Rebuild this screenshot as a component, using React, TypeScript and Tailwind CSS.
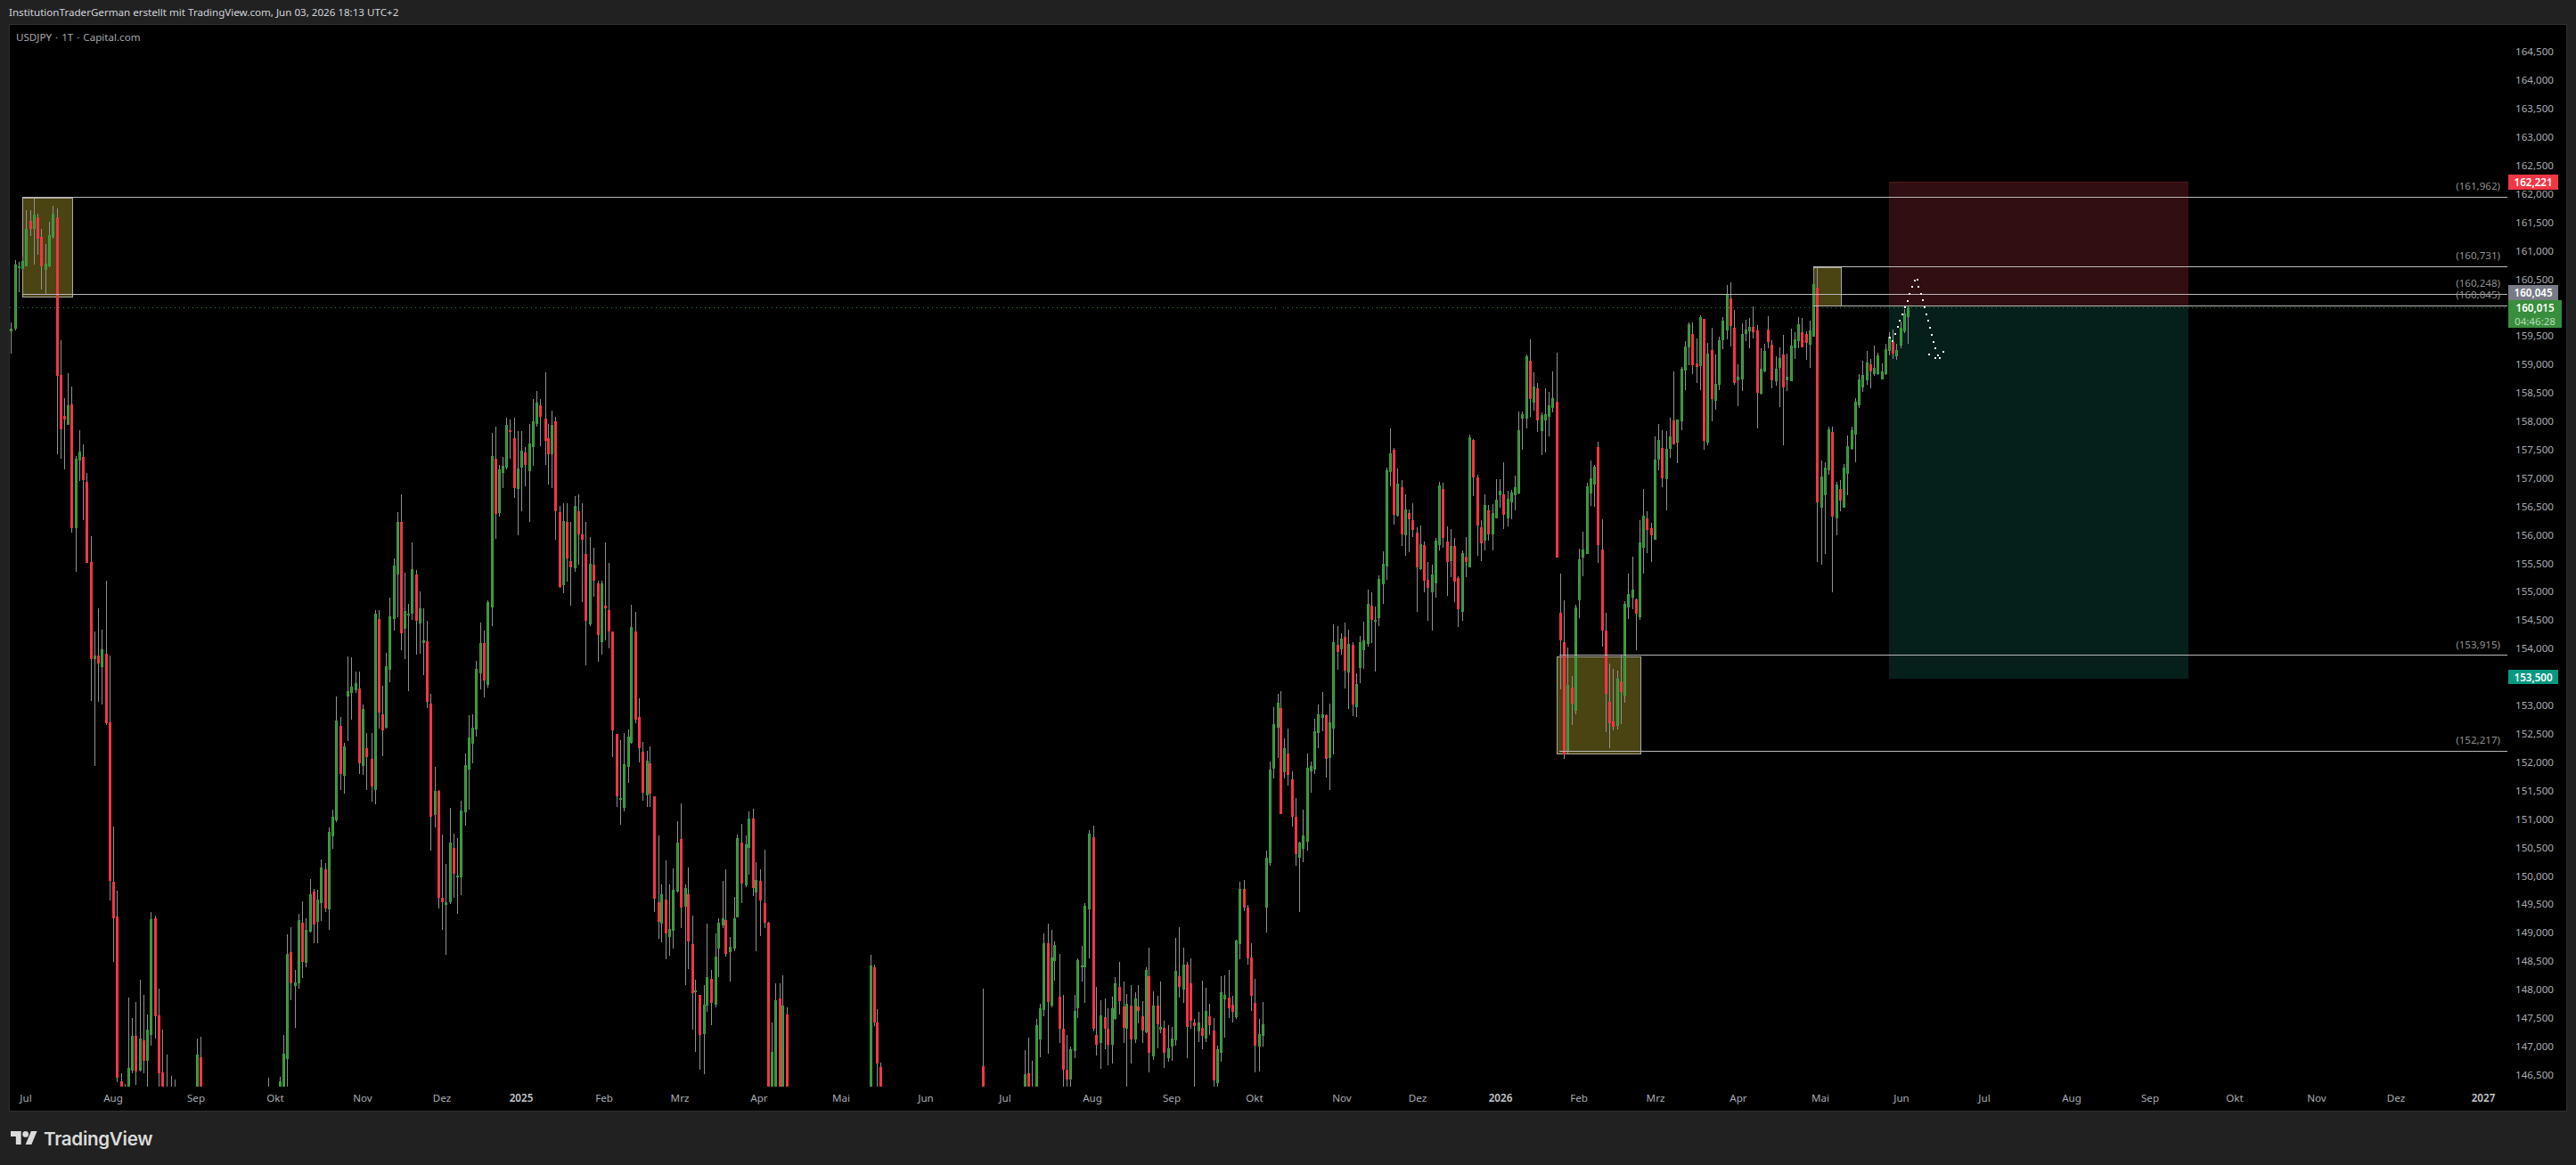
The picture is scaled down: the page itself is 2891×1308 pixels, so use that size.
import type { ReactNode } from "react";

// candles were read off the chart per region: x top bottom high low colour
type Candle = { x: number; top: number; bot: number; hi: number; lo: number; kind: string };

function seg(x0: number, sx: number, y0: number, sy: number, raw: string): Candle[] {
  return raw
    .trim()
    .split(/[;\n]+/)
    .map((s) => s.trim())
    .filter(Boolean)
    .map((s) => {
      const p = s.split(/\s+/);
      return {
        x: Math.round(x0 + Number(p[0]) / sx),
        top: y0 + Number(p[1]) / sy,
        bot: y0 + Number(p[2]) / sy,
        hi: y0 + Number(p[3]) / sy,
        lo: y0 + Number(p[4]) / sy,
        kind: p[5],
      };
    });
}

const candles: Candle[] = [
  ...seg(0, 2.24, 200, 1.522, `
27 257 262 247 300 g;39 148 257 140 260 g;48 151 154 143 195 g;57 141 155 133 156 g;66 87 150 55 150 g
76 73 87 54 98 r;86 62 87 35 148 g;95 67 103 60 130 r;104 100 151 87 190 r;115 146 156 113 197 g
124 97 150 75 152 g;133 61 100 47 103 g;143 67 338 52 472 r;153 336 429 277 480 r;162 407 413 376 497 r
171 388 421 333 421 g;180 387 598 356 605 r;191 480 598 475 672 g;200 467 483 431 517 g;209 476 516 455 585 r
218 519 657 504 657 r;229 656 822 612 893 r;238 816 822 775 1005 g;247 816 830 735 895 r;256 805 836 771 900 g
267 813 932 688 935 r;276 930 1201 816 1235 r;285 1203 1265 1108 1340 r;294 1262 1538 1218 1545 r;305 1544 1560 1530 1560 r
314 0 0 1548 1560 w;323 1521 1560 1400 1560 g;332 1466 1525 1435 1530 g;341 1466 1527 1408 1550 r;352 1471 1525 1370 1527 g
361 1473 1508 1396 1530 r;370 1455 1509 1430 1552 g;379 1267 1464 1254 1483 g;390 1265 1432 1260 1470 r;399 1431 1530 1385 1552 r
408 1528 1560 1455 1560 r;418 0 0 1498 1552 w;429 0 0 1535 1552 w;438 0 0 1540 1552 w
494 1498 1560 1470 1560 g;504 1503 1560 1468 1560 r;675 0 0 1537 1552 w;703 1544 1560 1536 1560 g;713 1496 1560 1465 1560 g
722 1326 1505 1292 1552 g;731 1323 1376 1280 1405 r;742 1374 1380 1353 1453 g;751 1268 1376 1258 1385 g;760 1272 1340 1236 1367 r
769 1285 1341 1265 1348 g;780 1224 1288 1198 1290 g;789 1219 1276 1215 1307 r;798 1233 1271 1216 1307 g;807 1178 1239 1165 1270 g
818 1181 1248 1170 1255 r;827 1117 1250 1110 1285 g;836 1092 1125 1079 1147 g;845 927 1098 886 1100 g;856 936 1018 921 1045 r
865 971 1021 965 1052 g;874 877 886 817 962 g;883 869 880 819 926 g;894 863 875 843 880 g;903 872 1000 843 1018 r
912 907 1004 900 1020 g;921 974 990 948 1045 r;933 993 1040 948 1065 r;942 744 1046 738 1070 g;951 754 913 738 940 r
960 917 943 868 988 r;969 834 939 812 940 g;980 749 840 717 862 g;989 662 754 650 773 g;998 588 677 571 750 g
1007 588 778 540 806 r;1018 740 770 674 822 g;1027 744 747 727 876 g;1036 668 744 623 755 g;1045 677 757 670 815 r
1056 735 761 706 813 g;1065 790 795 735 850 g;1074 792 895 757 905 r;1083 898 1091 881 1150 r;1094 1047 1088 1006 1110 g
1103 1047 1230 1045 1248 r;1112 1230 1238 1122 1285 r;1121 1237 1242 1172 1327 g;1132 1136 1238 1076 1241 g;1141 1145 1189 1120 1230 r
1150 1192 1195 1128 1257 g;1159 1081 1195 1064 1225 g;1170 1003 1084 983 1107 g;1179 956 1010 918 1080 g;1188 939 967 917 1000 g
1197 839 942 825 955 g;1208 795 847 760 873 g;1217 795 859 773 887 r;1226 725 866 722 870 g;1236 475 734 435 765 g
1246 480 574 425 616 r;1255 498 572 490 578 g;1264 492 504 476 530 g;1273 422 495 410 497 g;1282 430 432 413 480 r
1293 445 530 410 547 r;1302 496 531 432 610 g;1311 465 495 432 569 g;1320 469 490 460 527 r;1331 454 500 420 587 g
1340 416 460 377 492 g;1349 383 420 364 425 g;1358 388 408 378 458 r;1370 411 449 332 490 r;1378 445 472 420 523 r
1387 422 472 397 530 g;1396 416 569 408 618 r;1407 571 698 560 700 r;1416 586 695 556 710 g;1425 588 650 556 690 r
1434 655 665 588 730 r;1445 560 667 543 672 g;1454 569 609 540 660 r;1463 609 618 556 725 r;1472 642 757 588 833 r
1483 659 763 613 765 g;1492 660 688 632 715 r;1502 693 781 688 826 r;1511 693 793 688 815 g;1522 731 735 623 790 r
1531 738 775 657 803 r;1540 775 943 775 990 r;1549 950 1056 950 1075 r;1560 1060 1063 960 1105 g
`),
  ...seg(700, 2.613, 380, 1.845, `
1 882 973 817 980 g;12 825 887 810 921 g;22 597 838 552 840 g;33 607 790 566 798 r;45 785 848 745 878 r
56 856 941 836 958 r;67 875 947 855 971 g;77 881 943 845 970 r;90 948 1161 948 1188 r;101 1168 1208 1029 1243 r
111 1151 1212 1131 1252 g;122 1162 1232 1081 1286 r;134 1224 1240 1132 1278 g;145 1142 1228 1098 1264 g;156 1044 1146 1000 1148 g
166 1037 1179 963 1222 r;179 1139 1177 1132 1340 g;189 1151 1249 1096 1306 r;200 1254 1357 1195 1432 r;210 1350 1354 1328 1478 g
223 1360 1443 1360 1515 r;234 1380 1441 1340 1524 g;244 1324 1382 1213 1395 g;255 1326 1376 1308 1422 r;268 1280 1380 1232 1386 g
278 1211 1265 1202 1323 g;289 1202 1216 1123 1222 g;299 1205 1275 1100 1280 r;312 1260 1271 1241 1332 g;323 1201 1264 1157 1270 g
333 1035 1199 1028 1199 g;344 1044 1129 1005 1170 r;357 1048 1133 1030 1136 g;367 994 1055 980 1110 g;378 994 1138 974 1155 r
388 1122 1148 1085 1270 g;399 1123 1164 1100 1238 r;412 1170 1210 1060 1222 r;422 1210 1570 1208 1570 r;433 1478 1570 1418 1570 g
443 1371 1570 1336 1570 g;456 1367 1570 1337 1570 r;466 1382 1570 1319 1570 g;477 1400 1570 1386 1570 r
723 1299 1570 1277 1570 g;733 1302 1417 1298 1425 r;743 1417 1502 1390 1570 r;753 1510 1570 1500 1570 r;1054 1507 1570 1348 1570 r
1175 1524 1570 1474 1570 g;1187 1522 1570 1448 1570 r;1198 0 0 1496 1570 w;1209 1422 1570 1410 1570 g;1219 1387 1452 1378 1490 g
1232 1253 1391 1232 1405 g;1243 1253 1374 1212 1482 r;1253 1282 1382 1225 1386 g;1263 1256 1290 1250 1330 g;1277 1363 1431 1275 1460 r
1287 1430 1515 1360 1570 r;1298 1516 1535 1444 1570 r;1308 1472 1535 1467 1570 g;1321 1393 1477 1360 1492 g;1331 1289 1388 1284 1408 g
1342 1299 1302 1258 1333 g;1352 1175 1302 1170 1376 g;1365 1026 1182 1018 1284 g;1376 1033 1430 1010 1435 r;1386 1443 1463 1343 1486 r
1397 1402 1460 1372 1514 g;1410 1406 1431 1368 1472 r;1420 1430 1463 1388 1506 r;1431 1387 1463 1363 1502 g;1441 1336 1410 1324 1412 g
1454 1343 1373 1291 1400 r;1465 1384 1428 1332 1460 r;1475 1378 1430 1358 1570 g;1486 1382 1452 1340 1502 r;1499 1368 1453 1355 1460 g
1509 1384 1394 1340 1420 r;1520 1404 1433 1373 1460 r;1530 1308 1437 1302 1440 g;1540 1321 1480 1262 1520 r;1553 1382 1487 1352 1495 g
1564 1382 1421 1362 1470 r
`),
  ...seg(1000, 3, 900, 3, `
907 760 770 606 782 g;919 762 846 738 897 r;934 832 864 753 876 g;946 798 825 759 875 g;958 570 804 459 822 g
970 588 624 423 660 r;985 549 633 491 680 g;997 549 759 540 866 r;1009 612 738 528 766 r;1021 744 756 732 960 r
1036 744 774 708 810 g;1048 762 789 603 834 r;1060 705 798 627 810 g;1072 723 753 681 786 r;1087 771 939 729 960 r
1099 834 948 822 960 g;1111 642 846 588 876 g;1123 651 666 585 795 g;1138 660 696 567 729 r;1150 684 708 654 744 r
1162 468 726 465 732 g;1174 294 480 270 531 g;1189 294 357 264 369 r;1201 357 528 348 549 r;1213 525 654 477 705 r
1225 678 822 597 912 r;1240 783 825 732 909 g;1252 750 789 675 825 g;1264 189 357 165 441 g
`),
  ...seg(1300, 3, 350, 2.24, `
376 1151 1387 1132 1393 g;388 1037 1150 995 1173 g;403 983 1046 962 1122 g;415 997 1263 954 1263 r;427 1098 1158 1073 1175 g
439 1111 1165 1048 1193 r;454 1176 1271 1157 1295 r;466 1270 1364 1223 1393 r;478 1335 1373 1332 1511 g;490 1317 1350 1252 1384 g
505 1147 1333 1111 1355 g;517 1142 1156 1132 1210 g;529 1055 1151 1023 1163 g;541 1012 1060 987 1098 g;556 1012 1021 956 1055 g
568 1015 1124 1012 1172 r;580 1033 1122 986 1203 g;592 831 1048 786 1113 g;607 837 856 791 900 r;619 822 850 809 862 g
631 818 903 782 948 r;643 836 907 800 999 g;658 838 988 830 1017 r;670 936 995 909 1019 g;682 831 896 815 935 g
694 827 851 780 898 g;709 735 836 700 842 g;721 739 775 706 834 r;733 775 780 741 905 g;745 672 770 663 790 g
760 634 685 603 735 g;772 399 641 393 675 g;784 356 403 293 439 g;796 347 511 343 535 r;808 432 513 394 516 g
823 441 560 423 590 r;835 497 562 459 613 g;847 506 522 497 605 r;859 524 549 482 566 r;874 556 643 543 755 r
886 585 648 538 650 g;898 587 676 578 705 r;910 674 694 629 777 r;925 661 706 636 802 g;937 576 683 568 720 g
949 437 587 428 600 g;961 446 569 430 594 r;976 578 629 540 715 r;988 589 627 547 668 g;1000 589 679 568 730 r
1012 670 748 665 793 r;1027 607 754 600 777 g;1039 616 629 567 668 r;1051 316 642 310 642 g;1063 323 417 320 464 r
1078 417 538 410 614 r;1090 542 582 525 627 r;1102 486 576 460 600 g;1114 500 560 485 575 r;1129 506 560 484 600 g
1141 473 520 421 520 g;1153 450 461 421 492 g;1165 459 511 379 546 r;1180 470 520 450 540 g;1192 455 479 448 522 g
1204 441 461 412 500 g;1216 298 457 251 460 g;1228 258 269 250 347 g;1243 112 268 108 293 g;1255 123 220 69 265 r
1267 188 228 152 248 g;1279 193 273 178 302 r;1294 260 300 254 361 g;1306 258 273 193 354 g;1318 235 264 202 314 g
1330 217 242 150 253 g;1345 226 618 103 618 r
`),
  ...seg(1700, 3, 280, 2.613, `
157 1066 1146 951 1290 r;169 1152 1483 1030 1494 r;181 1278 1475 1168 1478 g;196 1286 1333 1252 1396 r;208 1051 1353 1043 1363 g
220 909 1030 878 1082 g;232 881 904 828 959 g;247 695 893 685 893 g;259 672 716 619 753 g;271 638 690 632 755 g
283 580 867 564 920 r;298 881 1118 792 1166 r;310 1119 1303 1066 1416 r;322 1328 1389 1215 1463 r;334 1385 1401 1231 1411 r
349 1260 1397 1236 1408 g;361 1267 1298 1190 1392 r;373 1040 1308 1031 1330 g;385 1011 1051 951 1085 g;400 998 1022 902 1056 g
412 1027 1069 1025 1176 r;424 860 1078 795 1086 g;436 781 875 703 950 g;448 789 823 768 890 r;463 818 839 803 917 r
475 617 851 549 851 g;487 559 617 513 648 g;499 583 671 531 697 r;514 585 673 532 766 g;526 549 585 494 612 g
538 502 571 358 571 r;550 499 567 498 627 g;565 350 503 345 531 g;577 285 354 269 412 g;589 220 287 214 340 g
601 248 340 214 365 r;616 335 345 260 393 r;628 199 342 192 412 g;640 204 561 204 587 r;652 306 567 275 575 g
667 295 439 231 503 r;679 395 444 307 470 g;691 267 397 257 412 g;703 209 267 199 293 g;718 133 237 105 264 g
730 144 224 97 285 r;742 230 392 178 398 r;754 374 383 337 460 g;769 248 381 217 416 g;781 235 248 207 268 g
793 227 240 201 290 g;805 227 243 167 261 r;820 238 421 222 525 r;832 350 423 290 425 g;844 298 358 277 360 g
856 235 272 196 290 r;868 280 384 267 408 r;883 350 387 314 400 g;895 319 348 287 463 g;907 308 405 251 575 r
919 374 384 306 415 g;934 282 387 233 387 g;946 264 290 244 321 g;958 220 269 199 290 g;970 243 286 201 288 r
985 248 274 241 324 r;997 238 280 209 348 g;1009 102 255 60 255 g;1021 112 742 52 917 r;1036 666 757 619 925 g
1048 640 721 625 893 g;1060 528 648 520 660 g;1072 536 783 520 1006 r;1087 690 789 682 838 g;1099 703 737 677 768 r
1111 640 757 630 758 g;1123 578 659 545 720 g;1138 531 586 520 587 g;1150 447 543 436 625 g;1162 382 456 366 465 g
1174 368 404 327 418 g;1189 332 384 297 397 g;1201 337 358 322 408 r;1213 348 366 282 370 g;1225 311 366 302 368 g
1240 358 382 335 382 g;1252 293 366 278 369 g;1264 257 298 243 311 g;1276 272 305 234 320 r;1288 295 314 278 324 g
1303 231 282 212 290 g;1315 188 240 176 246 g;1327 170 198 165 277 g
`),
];

// forecast dots drawn by the author on the chart
const dots = [
  [1264, 257], [1272, 266], [1280, 245], [1289, 226], [1297, 207], [1305, 187], [1314, 168], [1322, 148], [1330, 128],
  [1338, 108], [1347, 89], [1355, 86], [1360, 106], [1367, 127], [1373, 147], [1380, 167], [1386, 187], [1392, 207],
  [1399, 227], [1405, 247], [1411, 268], [1417, 288], [1424, 308], [1432, 317], [1415, 317], [1394, 306], [1444, 298],
].map(([x, y]) => [Math.round(1700 + x / 3), Math.round(280 + y / 2.613)]);

const prices: string[] = [];
for (let p = 164500; p >= 146500; p -= 500) {
  prices.push(String(p).slice(0, 3) + "," + String(p).slice(3));
}

const months: { label: string; x: number; year?: boolean }[] = [
  { label: "Jul", x: 29 }, { label: "Aug", x: 127 }, { label: "Sep", x: 220 }, { label: "Okt", x: 309 },
  { label: "Nov", x: 407 }, { label: "Dez", x: 496 }, { label: "2025", x: 585, year: true }, { label: "Feb", x: 678 },
  { label: "Mrz", x: 763 }, { label: "Apr", x: 852 }, { label: "Mai", x: 944 }, { label: "Jun", x: 1039 },
  { label: "Jul", x: 1128 }, { label: "Aug", x: 1226 }, { label: "Sep", x: 1315 }, { label: "Okt", x: 1408 },
  { label: "Nov", x: 1506 }, { label: "Dez", x: 1591 }, { label: "2026", x: 1684, year: true }, { label: "Feb", x: 1772 },
  { label: "Mrz", x: 1858 }, { label: "Apr", x: 1951 }, { label: "Mai", x: 2043 }, { label: "Jun", x: 2134 },
  { label: "Jul", x: 2227 }, { label: "Aug", x: 2325 }, { label: "Sep", x: 2413 }, { label: "Okt", x: 2508 },
  { label: "Nov", x: 2600 }, { label: "Dez", x: 2689 }, { label: "2027", x: 2787, year: true },
];

const levels = [
  { label: "(161,962)", y: 221, from: 25, labelY: 209 },
  { label: "(160,731)", y: 299, from: 2036, labelY: 287 },
  { label: "(160,248)", y: 330, from: 25, labelY: 318 },
  { label: "(160,045)", y: 343, from: 2036, labelY: 331 },
  { label: "(153,915)", y: 735, from: 1751, labelY: 724 },
  { label: "(152,217)", y: 843, from: 1751, labelY: 831 },
];

const boxes = [
  { x: 25, y: 222, w: 56, h: 111 },
  { x: 2036, y: 300, w: 31, h: 43 },
  { x: 1748, y: 737, w: 94, h: 109 },
];

function Chart() {
  return (
    <svg className="block" width={2805} height={1192} viewBox="11 28 2805 1192" shapeRendering="crispEdges">
      <rect x={2121} y={204} width={336} height={139} fill="#300e11" />
      <rect x={2121} y={204} width={336} height={1} fill="#52141a" />
      <rect x={2121} y={343} width={336} height={419} fill="#051f1b" />
      {boxes.map((b) => (
        <rect key={b.x} x={b.x + 0.5} y={b.y + 0.5} width={b.w} height={b.h} fill="#4a4312" stroke="#aaa99c" />
      ))}
      {candles.map((c, i) => (
        <g key={i}>
          <rect x={c.x} y={c.hi} width={1} height={Math.max(c.lo - c.hi, 1)} fill="#909090" />
          {c.kind !== "w" && (
            <rect
              x={c.x - 1}
              y={c.top}
              width={3}
              height={Math.max(c.bot - c.top, 2)}
              fill={c.kind === "g" ? "#43a047" : "#f23645"}
            />
          )}
          {c.kind === "g" && <rect x={c.x} y={c.top} width={1} height={Math.max(c.bot - c.top, 2)} fill="#388e3c" />}
        </g>
      ))}
      {levels.map((l) => (
        <g key={l.label}>
          <rect x={l.from} y={l.y} width={2815 - l.from} height={1} fill="#b9b9b9" />
          <text
            x={2807}
            y={l.labelY + 4}
            textAnchor="end"
            fill="#8f8f8f"
            className="font-['Noto_Sans',sans-serif] text-[11.6px]"
            shapeRendering="auto"
          >
            {l.label}
          </text>
        </g>
      ))}
      <line x1={11} y1={345.5} x2={2816} y2={345.5} stroke="#3b7d3f" strokeDasharray="1 4" />
      {dots.map(([x, y], i) => (
        <rect key={i} x={x} y={y} width={2} height={2} fill="#f5f5f5" />
      ))}
    </svg>
  );
}

function Badge({ className, children }: { className: string; children: ReactNode }) {
  return (
    <div className={`absolute left-0 flex flex-col items-center text-[11.6px] leading-[15px] ${className}`}>
      {children}
    </div>
  );
}

function PriceAxis() {
  return (
    <div className="relative w-[65px] pt-[14px] text-[11.6px] text-[#a9abb2]">
      {prices.map((p) => (
        <div key={p} className="flex h-[31.92px] items-center pl-[8px]">
          {p}
        </div>
      ))}
      <Badge className="top-[168px] h-[17px] w-[56px] justify-center bg-[#f23645] font-semibold text-white">162,221</Badge>
      <Badge className="top-[292px] h-[17px] w-[56px] justify-center bg-[#787b86] font-semibold text-white">160,045</Badge>
      <Badge className="top-[309px] h-[31px] w-[60px] justify-center bg-[#388e3c] text-[#b5dcb7]">
        <span className="font-semibold text-white">160,015</span>
        <span>04:46:28</span>
      </Badge>
      <Badge className="top-[724px] h-[16px] w-[56px] justify-center bg-[#089981] font-semibold text-white">153,500</Badge>
    </div>
  );
}

function TimeAxis() {
  return (
    <div className="relative h-[26px] text-[11.6px] text-[#a9abb2]">
      {months.map((m) => (
        <span
          key={m.label + m.x}
          className={`absolute top-[4px] -translate-x-1/2 ${m.year ? "font-semibold text-[#c4c6cc]" : ""}`}
          style={{ left: m.x - 11 }}
        >
          {m.label}
        </span>
      ))}
    </div>
  );
}

export default function App() {
  return (
    <div className="flex h-[1308px] w-[2891px] flex-col overflow-hidden bg-[#212121] font-['Noto_Sans',sans-serif]">
      <div className="flex h-[27px] items-center px-[10px] text-[11.6px] text-[#d1d4dc]">
        InstitutionTraderGerman erstellt mit TradingView.com, Jun 03, 2026 18:13 UTC+2
      </div>
      <div className="mx-[10px] flex h-[1221px] flex-col border border-[#2e2e2e] bg-black">
        <div className="relative flex h-[1192px]">
          <Chart />
          <div className="absolute left-[7px] top-[5px] flex gap-[4px] text-[11.6px] text-[#a4a6ad]">
            <span>USDJPY</span>
            <span>·</span>
            <span>1T</span>
            <span>·</span>
            <span>Capital.com</span>
          </div>
          <PriceAxis />
        </div>
        <TimeAxis />
      </div>
      <div className="flex flex-1 items-start gap-[7px] pl-[12px] pt-[19px] text-[#dbdbdb]">
        <svg width={30} height={16} viewBox="0 0 36 19" fill="currentColor" className="mt-[3px]">
          <path d="M14 18H7V7H0V0h14v18zM28 18h-8l7.5-18h8L28 18z" />
          <circle cx="20" cy="4" r="4" />
        </svg>
        <span className="font-['Inter',sans-serif] text-[20.6px] font-semibold leading-[24px] tracking-[-0.3px]">TradingView</span>
      </div>
    </div>
  );
}
